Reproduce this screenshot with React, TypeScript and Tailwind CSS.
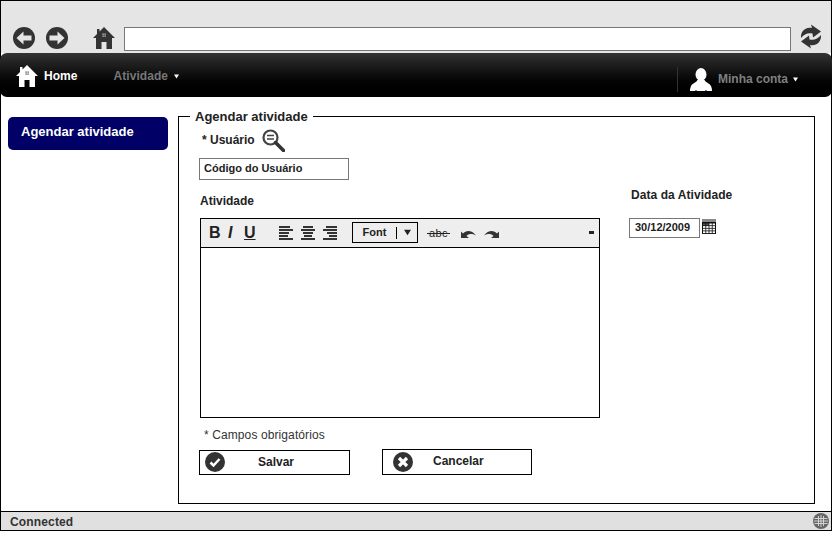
import { FC } from "react";

const Caret: FC<{ className?: string }> = ({ className }) => (
  <svg viewBox="0 0 5 5" className={`w-[5px] h-[5px] ${className ?? ""}`}>
    <path d="M0 0.5h5L2.5 4.5z" fill="currentColor" />
  </svg>
);

const ArrowCircle: FC<{ flip?: boolean }> = ({ flip }) => (
  <svg viewBox="0 0 22 22" className={`w-[22px] h-[22px] ${flip ? "-scale-x-100" : ""}`}>
    <circle cx="11" cy="11" r="11" fill="#333" />
    <path d="M3.5 11 10.5 4.5v4H18.5v5H10.5v4z" fill="#e5e5e5" />
  </svg>
);

const House: FC<{ color: string; door: string; className: string }> = ({ color, door, className }) => (
  <svg viewBox="0 0 22 22" className={className}>
    <path d="M11 0 22 11h-3v11h-5.500v-7h-5v7H3V11H0L4 7V2h2.500v2.500z" fill={color} />
    <rect x="9.500" y="6.500" width="1.200" height="1.200" fill={door} />
    <rect x="11.500" y="6.500" width="1.200" height="1.200" fill={door} />
    <rect x="9.500" y="8.500" width="1.200" height="1.200" fill={door} />
    <rect x="11.500" y="8.500" width="1.200" height="1.200" fill={door} />
  </svg>
);

const Refresh = () => (
  <svg viewBox="0 0 22 25" className="w-[22px] h-[25px]">
    <path d="M1 14C0.500 7 6 2.500 12 4L11 0.500 21 7.500 13 13.500 12.500 9.500C8 8.500 4 10 1 14z" fill="#333" />
    <path d="M1 14C0.500 7 6 2.500 12 4L11 0.500 21 7.500 13 13.500 12.500 9.500C8 8.500 4 10 1 14z" fill="#333" transform="rotate(180 11 12.500)" />
  </svg>
);

const Person = () => (
  <svg viewBox="0 0 22 23" className="w-[22px] h-[23px]">
    <ellipse cx="11" cy="6.500" rx="5.500" ry="6.500" fill="#fff" />
    <path d="M7.500 12c-1 2.500-5.500 3.500-6.500 6-.6 1.500-1 3-1 5h5l1-1 1 1h8l1-1 1 1h5c0-2-.4-3.500-1-5-1-2.500-5.500-3.500-6.500-6z" fill="#fff" />
  </svg>
);

const Magnifier = () => (
  <svg viewBox="0 0 23 23" className="w-[23px] h-[23px]">
    <circle cx="8.500" cy="8.500" r="7" fill="#fff" stroke="#444" strokeWidth="2.200" />
    <path d="M5 6.500h7M5 10h7" stroke="#444" strokeWidth="1.600" />
    <path d="M13.500 13.500 21.500 21.500" stroke="#333" strokeWidth="3.500" strokeLinecap="round" />
  </svg>
);

const AlignIcon: FC<{ lines: [number, number][] }> = ({ lines }) => (
  <svg viewBox="0 0 14 14" className="w-[14px] h-[14px]">
    {lines.map(([x, w], i) => (
      <rect key={i} x={x} y={i * 3} width={w} height="2" fill="#333" />
    ))}
  </svg>
);

const Curve: FC<{ flip?: boolean }> = ({ flip }) => (
  <svg viewBox="0 0 15 10" className={`w-[15px] h-[10px] ${flip ? "-scale-x-100" : ""}`}>
    <path d="M0 9V2.500l2 2C5 1 11 1 15 6.500 11 4.500 8 4.500 5.500 7L8 9z" fill="#333" />
  </svg>
);

const CalendarIcon = () => (
  <svg viewBox="0 0 14 15" className="w-[14px] h-[15px]">
    <rect x="0" y="0" width="14" height="3" fill="#8a8a8a" />
    <rect x="0" y="3" width="14" height="12" fill="#111" />
    {[0, 1, 2, 3].map((r) =>
      [0, 1, 2, 3].map((c) => (
        <rect key={`${r}-${c}`} x={1 + c * 3.2} y={4.500 + r * 2.600} width="2.400" height="1.800" fill={r === 0 && c < 2 ? "#555" : "#fff"} />
      )),
    )}
  </svg>
);

const GlobeIcon = () => (
  <svg viewBox="0 0 16 16" className="w-[16px] h-[16px]">
    <circle cx="8" cy="8" r="8" fill="#666" />
    <path d="M1.500 5.500h13M1 8h14M1.500 10.500h13" stroke="#ddd" strokeWidth="0.900" />
    <path d="M5.500 3v10M8 2v12M10.500 3v10" stroke="#ddd" strokeWidth="0.900" />
  </svg>
);

const CheckCircle = () => (
  <svg viewBox="0 0 20 20" className="w-5 h-5">
    <circle cx="10" cy="10" r="10" fill="#333" />
    <path d="M5.500 10.500 8.500 13.500 14.500 7" fill="none" stroke="#fff" strokeWidth="2.500" />
  </svg>
);

const CrossCircle = () => (
  <svg viewBox="0 0 20 20" className="w-5 h-5">
    <circle cx="10" cy="10" r="10" fill="#333" />
    <path d="M6 6 14 14M14 6 6 14" fill="none" stroke="#fff" strokeWidth="3.200" />
  </svg>
);

const Toolbar = () => (
  <div className="h-[29px] bg-[#eeeeee] border-b border-black flex items-center pl-[8px] pr-[5px] text-[#222]">
    <span className="w-[18px] mt-[1px] text-[16px] font-bold">B</span>
    <span className="w-[17px] mt-[1px] text-[16px] font-bold italic pl-[1px]">I</span>
    <span className="w-[35px] mt-[1px] text-[16px] font-bold underline">U</span>
    <div className="flex gap-[8px] mt-[1px]">
      <AlignIcon lines={[[0, 11], [0, 14], [0, 10], [0, 9], [0, 14]]} />
      <AlignIcon lines={[[2, 10], [0, 14], [2, 10], [3, 8], [0, 14]]} />
      <AlignIcon lines={[[3, 11], [0, 14], [4, 10], [6, 8], [0, 14]]} />
    </div>
    <div className="ml-[15px] w-[66px] h-[21px] border border-black flex items-center text-[11px] font-bold">
      <span className="w-[43px] text-center mb-[1px]">Font</span>
      <span className="w-px h-[12px] bg-black" />
      <Caret className="!w-[9px] !h-[7px] ml-[6px]" />
    </div>
    <span className="relative ml-[9px] mt-[2px] w-[23px] text-center text-[11px] text-[#222] tracking-[0.5px]">
      abc
      <span className="absolute left-0 right-0 top-[8px] h-px bg-[#222]" />
    </span>
    <div className="ml-[11px] flex gap-[8px] mt-[2px]">
      <Curve />
      <Curve flip />
    </div>
    <span className="ml-auto w-[5px] h-[3px] bg-[#222]" />
  </div>
);

export default function App() {
  return (
    <div className="w-[832px] h-[531px] border border-black flex flex-col bg-white font-['Liberation_Sans',Arial,sans-serif]">
      <div className="h-[52px] bg-[#e5e5e5] flex items-end pl-[12px] pr-[9px] pb-[2px] shrink-0">
        <div className="flex items-center gap-[11px] mb-[2px]">
          <ArrowCircle />
          <ArrowCircle flip />
        </div>
        <House color="#333" door="#e5e5e5" className="w-[22px] h-[22px] ml-[25px] mb-[2px]" />
        <div className="ml-[9px] w-[667px] h-[24px] bg-white border border-[#777]" />
        <div className="ml-[9px] mb-[2px]">
          <Refresh />
        </div>
      </div>

      <nav className="-mx-px h-[44px] shrink-0 rounded-[7px] bg-gradient-to-b from-[#333333] to-black flex items-center text-[12px] font-bold pt-[2px]">
        <House color="#fff" door="#333" className="w-[22px] h-[22px] ml-[16px]" />
        <span className="ml-[6px] text-white tracking-[0.05px]">Home</span>
        <span className="ml-[36px] text-[#777777] tracking-[0.05px]">Atividade</span>
        <Caret className="ml-[6px] text-white" />
        <div className="ml-auto mt-[6px] flex items-center">
          <span className="w-px h-[25px] bg-[#333]" />
          <div className="ml-[12px]">
            <Person />
          </div>
          <span className="ml-[6px] text-[#808080]">Minha conta</span>
          <Caret className="ml-[5px] mr-[34px] text-white" />
        </div>
      </nav>

      <div className="flex-1 min-h-0 flex">
        <aside className="w-[177px] shrink-0 pl-[7px] pt-[20px]">
          <div className="w-[160px] h-[33px] rounded-[5px] bg-[#000066] text-white text-[13px] font-bold pl-[13px] pt-[5px]">
            Agendar atividade
          </div>
        </aside>

        <fieldset className="mt-[10px] w-[637px] h-[397px] border border-black">
          <legend className="ml-[11px] px-[5px] text-[13px] font-bold text-[#222]">Agendar atividade</legend>
          <div className="flex pl-[20px]">
            <div className="w-[430px]">
              <div className="flex items-center h-[24px] pl-[3px] text-[12px] font-bold text-[#222]">
                <span className="mt-[2px]">* Usuário</span>
                <span className="ml-[7px] mt-[3px]">
                  <Magnifier />
                </span>
              </div>
              <div className="mt-[7px] w-[150px] h-[22px] border border-[#777] flex items-center pl-[4px] text-[11px] font-bold text-[#222]">
                Código do Usuário
              </div>
              <div className="mt-[12px] pl-[1px] text-[12px] font-bold text-[#222]">Atividade</div>
              <div className="mt-[8px] ml-[1px] w-[400px] h-[200px] border border-black">
                <Toolbar />
              </div>
              <div className="mt-[8px] pl-[5px] text-[12px] text-[#333] tracking-[0.1px]">* Campos obrigatórios</div>
              <div className="mt-[5px] flex items-start gap-[32px] text-[12px] font-bold text-[#222]">
                <button className="mt-[1px] w-[151px] h-[25px] border border-black flex items-center pl-[5px]">
                  <CheckCircle />
                  <span className="ml-[33px]">Salvar</span>
                </button>
                <button className="w-[150px] h-[26px] border border-black flex items-center pl-[10px]">
                  <CrossCircle />
                  <span className="ml-[20px] mb-[2px]">Cancelar</span>
                </button>
              </div>
            </div>
            <div className="pt-[59px]">
              <div className="pl-[2px] text-[12px] font-bold text-[#222] tracking-[0.06px]">Data da Atividade</div>
              <div className="mt-[14px] flex items-center">
                <div className="w-[71px] h-[20px] border border-[#777] flex items-center pl-[5px] text-[11px] font-bold text-[#222]">
                  30/12/2009
                </div>
                <span className="ml-[2px] mt-[-2px]">
                  <CalendarIcon />
                </span>
              </div>
            </div>
          </div>
        </fieldset>
      </div>

      <div className="h-[19px] shrink-0 bg-[#e0e0e0] border-t border-black flex items-center pl-[9px] pr-[2px] text-[12px] font-bold text-[#333] tracking-[0.15px]">
        <span className="mt-[1px]">Connected</span>
        <span className="ml-auto">
          <GlobeIcon />
        </span>
      </div>
    </div>
  );
}
